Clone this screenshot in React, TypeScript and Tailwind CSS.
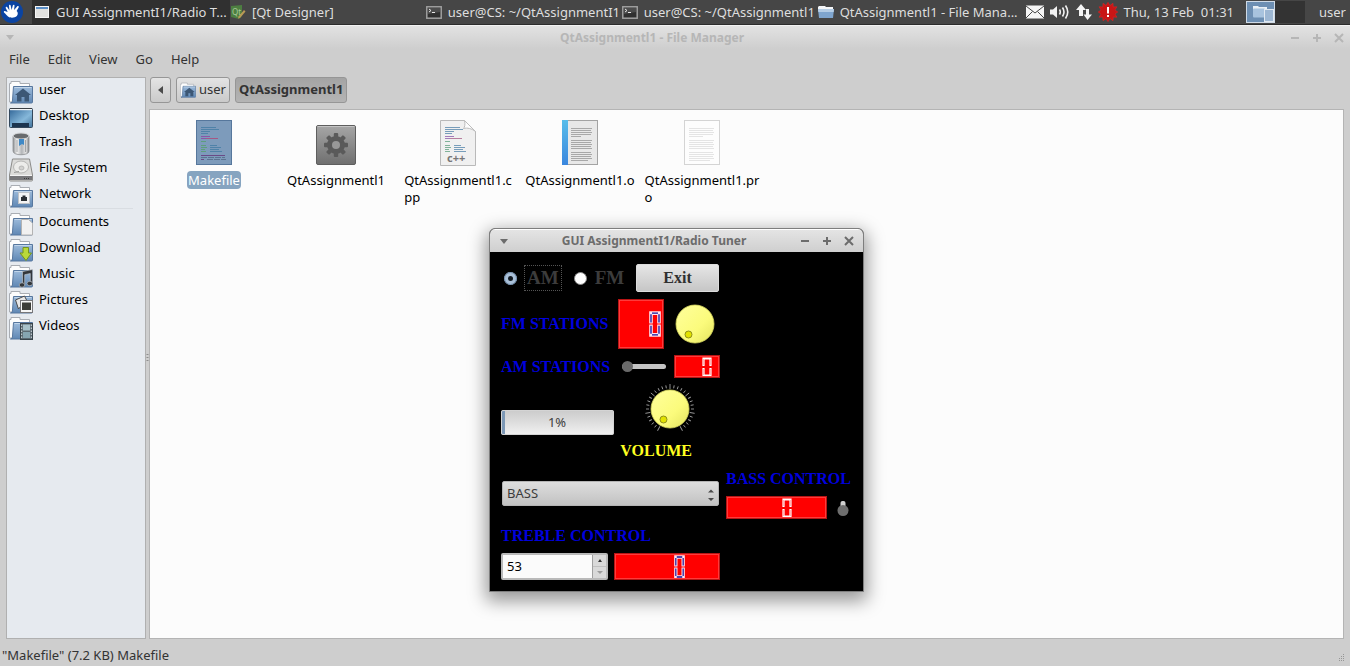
import React from "react";

type Kids = { children?: React.ReactNode };

/* ---------- icons ---------- */

function FolderIcon({ children, className = "h-6 w-6" }: Kids & { className?: string }) {
  return (
    <svg viewBox="0 0 24 24" className={`${className} shrink-0`} aria-hidden="true">
      <defs>
        <linearGradient id="folder" x1="0" y1="0" x2="0" y2="1">
          <stop offset="0" stopColor="#9dbbdb" />
          <stop offset="1" stopColor="#5f87b4" />
        </linearGradient>
      </defs>
      <path d="M.5 22V3.500h1.500V1.500h9v2h9.500V10H6L4 22Z" fill="#fdfdfd" stroke="#a9adb3" />
      <path d="M4.500 6.500h19v15.500a1 1 0 0 1-1 1H1.500c1.500-.5 2-1 2-3Z" fill="url(#folder)" stroke="#57779e" />
      <path d="M5.500 7.500h17" stroke="#c2d6ea" />
      {children}
    </svg>
  );
}

const HomeGlyph = () => (
  <path d="M14 8.500 22 15h-2v6.500h-4.500V17h-3v4.500H8V15H6Z" fill="#3c5775" />
);

const DesktopIcon = () => (
  <svg viewBox="0 0 24 24" className="h-6 w-6 shrink-0" aria-hidden="true">
    <defs>
      <linearGradient id="desk" x1="0" y1="0" x2="1" y2="1">
        <stop offset="0" stopColor="#2f6496" />
        <stop offset=".6" stopColor="#86b8da" />
        <stop offset="1" stopColor="#3f7099" />
      </linearGradient>
    </defs>
    <rect x=".5" y="2.500" width="23" height="19" rx="1" fill="url(#desk)" stroke="#34485c" />
    <path d="M1 3.500h22" stroke="#f2f4f6" strokeWidth="1.400" />
    <path d="M1 2.500h22" stroke="#3a3f45" />
    <rect x="3" y="17" width="17" height="4" fill="#1c3550" />
  </svg>
);

const TrashIcon = () => (
  <svg viewBox="0 0 24 24" className="h-6 w-6 shrink-0" aria-hidden="true">
    <defs>
      <linearGradient id="bin" x1="0" x2="1" y1="0" y2="0">
        <stop offset="0" stopColor="#8b8e91" />
        <stop offset=".25" stopColor="#f2f2f2" />
        <stop offset=".55" stopColor="#b2b5b8" />
        <stop offset=".8" stopColor="#e6e6e6" />
        <stop offset="1" stopColor="#7d8083" />
      </linearGradient>
    </defs>
    <path d="M4 4v15c0 5 16 5 16 0V4Z" fill="url(#bin)" stroke="#8d8f92" strokeWidth=".8" />
    <ellipse cx="12" cy="4" rx="8" ry="3" fill="#686b6e" stroke="#d4d6d8" />
    <path d="M10 7h5v6l-2-1-3 2Z" fill="#3f89c6" />
    <path d="M8 8v12M16.500 8v12" stroke="#8a8c8f" strokeWidth=".7" />
  </svg>
);

const DriveIcon = () => (
  <svg viewBox="0 0 24 24" className="h-6 w-6 shrink-0" aria-hidden="true">
    <path d="M3.500 1h17L23.500 17v5a1 1 0 0 1-1 1h-21a1 1 0 0 1-1-1v-5Z" fill="#dcdcda" stroke="#8b8b89" />
    <path d="M1 18h22v4H1Z" fill="#77777a" />
    <path d="M1 17.500h22" stroke="#f4f4f4" />
    <ellipse cx="12" cy="9" rx="7.500" ry="6" fill="#ececea" stroke="#b5b5b3" />
    <ellipse cx="12.500" cy="10" rx="2.500" ry="2" fill="#d2d2d0" stroke="#a8a8a6" strokeWidth=".7" />
    <path d="M5 14.500l5-1" stroke="#9a9a98" />
    <path d="M15 20.500h6" stroke="#3b3b3b" strokeDasharray="1 1" />
  </svg>
);

const NetworkGlyph = () => (
  <g>
    <rect x="9.500" y="8.500" width="11" height="11" fill="#f4f4f4" stroke="#bfc3c8" />
    <path d="M12 17v-4h1.500v-1.500h3V13H18v4Z" fill="#2b2f33" />
  </g>
);
const DocumentGlyph = () => (
  <path d="M12.500 7.500h7l4 3.500v12h-11Z" fill="#f1f1f1" stroke="#b3b3b3" />
);
const DownloadGlyph = () => (
  <path d="M14 9.500h5.500V15h3L17 22.500 11 15h3Z" fill="#b9d93a" stroke="#75951c" />
);
const MusicGlyph = () => (
  <g fill="#33373c" stroke="#c9ced4" strokeWidth=".6">
    <path d="M13.500 7.500 23.500 5.500V19h-2.200V9.500l-5.600 1.200V21h-2.200Z" />
    <ellipse cx="13" cy="21" rx="2.800" ry="2.200" />
    <ellipse cx="20.800" cy="19.500" rx="2.800" ry="2.200" />
  </g>
);
const PictureGlyph = () => (
  <g>
    <path d="m6.500 10 9-4 2 4-8 9Z" fill="#e8e8e8" stroke="#4b4b4b" />
    <rect x="11.500" y="10.500" width="12" height="12" fill="#f6f6f6" stroke="#77777a" />
    <rect x="13" y="12.500" width="9" height="7.500" fill="#3c3d38" />
  </g>
);
const VideoGlyph = () => (
  <g>
    <rect x="11.500" y="7.500" width="12" height="16" fill="#5c6a72" stroke="#39444b" />
    <rect x="14" y="8.500" width="7" height="6" fill="#a7c1c9" />
    <rect x="14" y="16" width="7" height="6" fill="#86a5b1" />
    <path d="M12.700 8.500v15M22.300 8.500v15" stroke="#d4dde1" strokeDasharray="1.500 1.500" />
  </g>
);

const Lines = ({ x, y, rows, color }: { x: number; y: number; rows: number[]; color: string }) => (
  <g stroke={color} strokeWidth="1">
    {rows.map((w, i) => (w ? <path key={i} d={`M${x} ${y + i * 2}h${w}`} /> : null))}
  </g>
);

const CodeLines = ({ y = 8.5 }: { y?: number }) => (
  <g strokeWidth="1">
    <path d={`M11 ${y}h15M11 ${y + 2}h18M11 ${y + 4}h9M11 ${y + 6}h7`} stroke="#4f82a8" />
    <path d={`M11 ${y + 9}h9M11 ${y + 11}h5`} stroke="#8a55a8" />
    <path d={`M16 ${y + 11}h12`} stroke="#a55884" />
    <path d={`M11 ${y + 14}h5M11 ${y + 18}h5M11 ${y + 20}h6M11 ${y + 22}h4M11 ${y + 24}h5`} stroke="#5d9e7c" />
    <path d={`M20 ${y + 18}h7M20 ${y + 20}h11M20 ${y + 22}h9M20 ${y + 24}h12`} stroke="#4f82a8" />
  </g>
);

const MakefileIcon = () => (
  <svg viewBox="0 0 48 48" className="h-12 w-12" aria-hidden="true">
    <rect x="6.500" y="1.500" width="35" height="44" fill="#7d9bbb" stroke="#56779c" />
    <CodeLines />
    <path d="M11 36.500h24M11 40.500h3" stroke="#6a4a86" />
    <path d="M11 38.500h24M17 40.500h19" stroke="#5c7391" strokeDasharray="6 1" />
  </svg>
);

const GearIcon = () => (
  <svg viewBox="0 0 48 48" className="h-12 w-12" aria-hidden="true">
    <defs>
      <linearGradient id="gearbg" x1="0" y1="0" x2="0" y2="1">
        <stop offset="0" stopColor="#a6a6a6" />
        <stop offset="1" stopColor="#6f6f6f" />
      </linearGradient>
    </defs>
    <rect x="4.500" y="6.500" width="39" height="39" rx="1.500" fill="url(#gearbg)" stroke="#5e5e5e" />
    <path d="M5.500 7.500h37" stroke="#c4c4c4" />
    <g fill="#5a5a5a">
      <circle cx="24" cy="26" r="9" />
      {[0, 45, 90, 135].map((a) => (
        <rect key={a} x="21.800" y="14" width="4.400" height="24" rx="1" transform={`rotate(${a} 24 26)`} />
      ))}
    </g>
    <circle cx="24" cy="26" r="4" fill="#989898" />
  </svg>
);

const CppIcon = () => (
  <svg viewBox="0 0 48 48" className="h-12 w-12" aria-hidden="true">
    <path d="M6.500 1.500h24l11 11v34h-35Z" fill="#f0f0f0" stroke="#b9b9b9" />
    <path d="M30.500 1.500c1 4 0 7-1 8 4-1 8 0 12 3Z" fill="#fdfdfd" stroke="#bcbcbc" />
    <g opacity=".75">
      <CodeLines />
    </g>
    <text x="13" y="43" fontSize="11" fontWeight="bold" fill="#777" fontFamily="Noto Sans, sans-serif">c++</text>
  </svg>
);

const textRows = [21, 20, 21, 20, 10, 0, 21, 20, 21, 20, 21, 0, 20, 21, 20, 21, 17];

const ObjectIcon = () => (
  <svg viewBox="0 0 48 48" className="h-12 w-12" aria-hidden="true">
    <defs>
      <linearGradient id="spine" x1="0" y1="0" x2="0" y2="1">
        <stop offset="0" stopColor="#58bdea" />
        <stop offset="1" stopColor="#3a86de" />
      </linearGradient>
    </defs>
    <rect x="6.500" y="1.500" width="35" height="44" fill="#e8e8e8" stroke="#a3a3a3" />
    <rect x="6" y="1" width="6" height="45" fill="url(#spine)" />
    <Lines x={15} y={9.5} rows={textRows} color="#a8a8a8" />
  </svg>
);

const TextIcon = () => (
  <svg viewBox="0 0 48 48" className="h-12 w-12" aria-hidden="true">
    <rect x="6.500" y="1.500" width="35" height="44" fill="#fdfdfd" stroke="#d4d4d4" />
    <Lines x={11} y={9.5} rows={textRows.map((w) => (w ? w + 4 : 0))} color="#e4e4e4" />
  </svg>
);

/* ---------- top panel ---------- */

const TerminalIcon = () => (
  <svg viewBox="0 0 16 16" className="h-4 w-4 shrink-0" aria-hidden="true">
    <rect x=".8" y="2.800" width="14.400" height="11.400" fill="#303030" stroke="#a0a0a0" strokeWidth="1.500" />
    <path d="M2 4h12v4L2 10Z" fill="#4c4c4c" />
    <path d="m3 5 2 1.500L3 8M6 8.500h3" stroke="#e6e6e6" fill="none" />
  </svg>
);
const WindowIcon = () => (
  <svg viewBox="0 0 16 16" className="h-4 w-4 shrink-0" aria-hidden="true">
    <rect x="1" y="2" width="14" height="12" fill="#e2e2e0" />
    <rect x="1" y="2" width="14" height="3" fill="#5b8fc7" />
    <rect x="1.500" y="2.500" width="13" height="11" fill="none" stroke="#f6f6f6" />
  </svg>
);
const QtIcon = () => (
  <svg viewBox="0 0 16 16" className="h-4 w-4 shrink-0" aria-hidden="true">
    <path d="M1 2 12 1v11L9 15 1 13Z" fill="#4d7f41" />
    <text x="2" y="11" fontSize="8" fill="#a9c99a" fontFamily="Noto Sans, sans-serif">Qt</text>
    <path d="m14 6 1.500 1.500L10 14l-2 .5.500-2Z" fill="#b99a55" />
  </svg>
);
const SmallFolderIcon = () => (
  <svg viewBox="0 0 16 16" className="h-4 w-4 shrink-0" aria-hidden="true">
    <path d="M0 3 1 2h6l1 1h7v4H0Z" fill="#f4f6f8" />
    <path d="M0 5h16l-1 9H1Z" fill="#7fa5ce" />
    <path d="M0 5h16l-.3 3H.3Z" fill="#b5cde5" />
  </svg>
);

function Task({ icon, active, children }: Kids & { icon: React.ReactNode; active?: boolean }) {
  return (
    <button
      className={`flex h-6 min-w-0 flex-1 items-center gap-1.5 whitespace-nowrap text-left ${
        active ? "bg-[#303030] pl-0.5" : ""
      }`}
    >
      {icon}
      {children}
    </button>
  );
}

function Panel() {
  return (
    <header className="flex h-[25px] shrink-0 items-center border-b border-[#2c2c2c] bg-[#464646] text-[13px] leading-4 text-[#dedede]">
      <button aria-label="Applications menu" className="mr-2 h-6 w-6 shrink-0">
        <svg viewBox="0 0 24 24" className="h-6 w-6" aria-hidden="true">
          <circle cx="12" cy="12" r="11" fill="#0b44a2" />
          <path
            d="M4.500 11c1.200-.3 2.200 1 3.200.8L5.800 8.200c-.5-1.400 1-1.900 1.700-.8l1.900 3L9 5.800c0-1.500 1.500-1.500 1.700-.2l.9 4.400 1.200-4.400c.5-1.300 1.900-.9 1.700.5l-.4 4 3-3.600c1-1 2.100-.1 1.500 1l-2 3.500c1.500 1 1.600 3.500.2 5-2 2-6.500 2.300-8.800.5C6.500 15.200 6 14 4.300 12.700c-.8-.7-.5-1.500.2-1.700Z"
            fill="#fff"
          />
        </svg>
      </button>
      <nav className="flex min-w-0 flex-1" aria-label="Windows">
        <Task active icon={<WindowIcon />}>GUI AssignmentI1/Radio T...</Task>
        <Task icon={<QtIcon />}>[Qt Designer]</Task>
        <Task icon={<TerminalIcon />}>user@CS: ~/QtAssignmentI1</Task>
        <Task icon={<TerminalIcon />}>user@CS: ~/QtAssignmentl1</Task>
        <Task icon={<SmallFolderIcon />}>QtAssignmentl1 - File Mana...</Task>
      </nav>
      <div className="flex shrink-0 items-center gap-1.5 pl-3 pr-1.5">
        <svg viewBox="0 0 18 14" className="h-3.5 w-[18px]" aria-label="Mail" role="img">
          <rect width="18" height="13" y=".5" fill="#f5f5f5" />
          <path d="m0 1 9 7 9-7M0 13l6.500-6.500M18 13l-6.500-6.500" stroke="#464646" fill="none" />
        </svg>
        <svg viewBox="0 0 20 16" className="h-4 w-5" aria-label="Volume" role="img">
          <path d="M0 5.500h3L7 2v12l-4-3.500H0Z" fill="#f2f2f2" />
          <path d="M9.500 5.500q1.500 2.500 0 5M12.500 3.500q3 4.500 0 9M15.500 1.500q4.500 6.500 0 13" stroke="#f2f2f2" strokeWidth="1.600" fill="none" />
        </svg>
        <svg viewBox="0 0 16 16" className="h-4 w-4" aria-label="Network" role="img">
          <path d="M5 0 10 6H7v6H3V6H0ZM11.500 16 7.500 10.500H10V5h3v5.500h3Z" fill="#f4f4f4" />
        </svg>
        <svg viewBox="0 0 20 20" className="h-5 w-5" aria-label="Alert" role="img">
          <path
            d="m10 .3 1.900 3.200L15 1.300l.2 3.700 3.700-.2-2 3.200 2.900 2-2.900 2 2 3.200-3.700-.2-.2 3.700-3.100-2.200L10 19.700l-1.900-3.200L5 18.700 4.800 15l-3.700.2 2-3.200-2.900-2 2.900-2-2-3.200 3.700.2L5 1.300l3.100 2.200Z"
            fill="#c81616"
            stroke="#e02424"
            strokeWidth=".6"
          />
          <path d="M10 5v6.500M10 13v2" stroke="#fff" strokeWidth="2" />
        </svg>
      </div>
      <time className="shrink-0 whitespace-pre">Thu, 13 Feb  01:31</time>
      <div className="ml-3 mr-3.5 flex h-[22px] shrink-0" aria-label="Workspaces">
        <button aria-label="Workspace 1" className="h-full w-[29px] border border-[#cfdae6] bg-[#6d8fb3]">
          <svg viewBox="0 0 27 20" className="h-full w-full" aria-hidden="true">
            <path d="M6 5V4h5l1 1h8v4H6Z" fill="#e9eff5" />
            <rect x="6" y="6.500" width="12" height="9" rx="1" fill="#a8c3de" />
            <rect x="17.500" y="7.500" width="9" height="12" fill="#9db7d3" stroke="#dfe8f1" />
          </svg>
        </button>
        <button aria-label="Workspace 2" className="h-full w-[30px] bg-[#333333]" />
      </div>
      <button className="shrink-0 pr-1">user</button>
    </header>
  );
}

/* ---------- file manager ---------- */

function TitleGlyphs() {
  return (
    <div className="flex gap-3">
      <button aria-label="Minimize">
        <svg viewBox="0 0 10 10" className="h-2.5 w-2.5"><path d="M1 5h8" stroke="currentColor" strokeWidth="2" /></svg>
      </button>
      <button aria-label="Maximize">
        <svg viewBox="0 0 10 10" className="h-2.5 w-2.5"><path d="M1 5h8M5 1v8" stroke="currentColor" strokeWidth="2" /></svg>
      </button>
      <button aria-label="Close">
        <svg viewBox="0 0 10 10" className="h-2.5 w-2.5"><path d="m1 1 8 8M9 1 1 9" stroke="currentColor" strokeWidth="2" /></svg>
      </button>
    </div>
  );
}

function TitleArrow() {
  return (
    <button aria-label="Window menu">
      <svg viewBox="0 0 8 5" className="h-[5px] w-2"><path d="M0 0h8L4 5Z" fill="currentColor" /></svg>
    </button>
  );
}

const places = [
  { name: "user", icon: <FolderIcon><HomeGlyph /></FolderIcon> },
  { name: "Desktop", icon: <DesktopIcon /> },
  { name: "Trash", icon: <TrashIcon /> },
  { name: "File System", icon: <DriveIcon /> },
  { name: "Network", icon: <FolderIcon><NetworkGlyph /></FolderIcon> },
];
const bookmarks = [
  { name: "Documents", icon: <FolderIcon><DocumentGlyph /></FolderIcon> },
  { name: "Download", icon: <FolderIcon><DownloadGlyph /></FolderIcon> },
  { name: "Music", icon: <FolderIcon><MusicGlyph /></FolderIcon> },
  { name: "Pictures", icon: <FolderIcon><PictureGlyph /></FolderIcon> },
  { name: "Videos", icon: <FolderIcon><VideoGlyph /></FolderIcon> },
];

function PlaceList({ items }: { items: typeof places }) {
  return (
    <ul>
      {items.map((p) => (
        <li key={p.name}>
          <a href="#" className="flex h-[26px] items-center gap-1.5 pl-0.5">
            <span className="pt-0.5">{p.icon}</span>
            <span className="pb-0.5">{p.name}</span>
          </a>
        </li>
      ))}
    </ul>
  );
}

const files = [
  { lines: ["Makefile"], icon: <MakefileIcon />, selected: true },
  { lines: ["QtAssignmentl1"], icon: <GearIcon /> },
  { lines: ["QtAssignmentl1.c", "pp"], icon: <CppIcon /> },
  { lines: ["QtAssignmentl1.o"], icon: <ObjectIcon /> },
  { lines: ["QtAssignmentl1.pr", "o"], icon: <TextIcon /> },
];

const crumb = "flex h-[26px] items-center justify-center rounded-[3px] border border-[#969696]";

function FileManager() {
  return (
    <main className="flex min-h-0 flex-1 flex-col bg-[#cecece] text-[#333333]">
      <div className="flex h-6 shrink-0 items-center border-t border-[#f2f2f2] bg-linear-to-b from-[#e2e2e2] to-[#cecece] px-1.5 text-[#b6b6b6]">
        <TitleArrow />
        <h1 className="flex-1 text-center text-[12px] font-bold leading-4">QtAssignmentl1 - File Manager</h1>
        <TitleGlyphs />
      </div>
      <nav className="flex h-7 shrink-0 items-center gap-[18px] px-[9px] pb-1.5 text-[13px]" aria-label="Menu">
        {["File", "Edit", "View", "Go", "Help"].map((m) => (
          <button key={m}>{m}</button>
        ))}
      </nav>
      <div className="flex min-h-0 flex-1 pl-1.5 pr-1.5">
        <aside className="w-[140px] shrink-0 border border-[#b0b0b0] bg-[#e6eaef] text-[13px] text-black">
          <PlaceList items={places} />
          <hr className="mx-3 mb-px h-0 border-0 border-t border-[#d9dde2]" />
          <PlaceList items={bookmarks} />
        </aside>
        <div className="flex w-[3px] shrink-0 items-center justify-center" aria-hidden="true">
          <svg viewBox="0 0 3 8" className="h-2 w-[3px]"><path d="M1.500 0v8" stroke="#8e8e8e" strokeDasharray="1 2" strokeWidth="2" /></svg>
        </div>
        <section className="flex min-w-0 flex-1 flex-col">
          <div className="flex h-8 shrink-0 gap-[5px] pl-px text-[13px]">
            <button aria-label="Back" className={`${crumb} w-[21px] bg-linear-to-b from-[#e4e4e4] to-[#cacaca]`}>
              <svg viewBox="0 0 5 8" className="h-2 w-[5px]"><path d="M5 0v8L0 4Z" fill="#4a4a4a" /></svg>
            </button>
            <button className={`${crumb} w-[54px] gap-[3px] bg-linear-to-b from-[#e4e4e4] to-[#cacaca]`}>
              <FolderIcon className="h-4 w-4"><HomeGlyph /></FolderIcon>
              user
            </button>
            <button className={`${crumb} bg-linear-to-b from-[#a4a4a4] to-[#b4b4b4] px-[3px] font-bold`}>QtAssignmentl1</button>
          </div>
          <ul className="flex flex-1 flex-wrap content-start border border-[#b4b4b4] bg-[#fcfcfc] pl-[3px] pt-[9px] text-[13px] leading-[17px] text-black">
            {files.map((f) => (
              <li key={f.lines[0]} className="flex w-[122px] flex-col items-center">
                {f.icon}
                <span
                  className={`mt-1 whitespace-nowrap rounded px-px pt-px ${f.selected ? "bg-[#86a4c0] text-white" : ""}`}
                >
                  {f.lines.map((l) => (
                    <span key={l} className="block">{l}</span>
                  ))}
                </span>
              </li>
            ))}
          </ul>
        </section>
      </div>
      <footer className="flex h-[27px] shrink-0 items-center justify-between px-0.5 pt-1.5 text-[13px]">
        "Makefile" (7.2 KB) Makefile
        <svg viewBox="0 0 10 10" className="mr-1 h-2.5 w-2.5" aria-hidden="true">
          <path d="M9.500 3v7M7.500 5v5M5.500 7v3" fill="none" stroke="#969696" strokeDasharray="1 1" />
        </svg>
      </footer>
    </main>
  );
}

/* ---------- radio tuner ---------- */

function Lcd({ className, tall, navy, label }: { className: string; tall?: boolean; navy?: boolean; label: string }) {
  return (
    <output
      aria-label={label}
      className={`flex items-center border border-[#b81414] bg-[#ff0000] outline-1 -outline-offset-2 outline-[#ff3a3a] ${className}`}
    >
      {tall || navy ? (
        <svg
          viewBox="0 0 12 24"
          preserveAspectRatio="none"
          className={tall ? "h-[26px] w-3" : "h-6 w-[11px]"}
          aria-hidden="true"
        >
          <path d="M2 11.500V2h8v9.500M2 12.500v9.500h8v-9.500" fill="none" stroke="#ffe4ee" strokeWidth="3.600" />
          <path d="M2 10.500V3M3 2h6M10 3v7.500M2 13.500V21M3 22h6M10 21v-7.500" fill="none" stroke="#14129a" strokeWidth="1.300" />
        </svg>
      ) : (
        <svg viewBox="0 0 10 20" className="h-5 w-2.5" aria-hidden="true">
          <path d="M1.500 9V1.500h7V9M1.500 11v7.500h7V11" fill="none" stroke="#ffffff" strokeWidth="2.200" />
          <path d="M1.500 8V2M8.500 8V2M1.500 12v6M8.500 12v6" fill="none" stroke="#ff8c8c" strokeWidth=".6" />
        </svg>
      )}
    </output>
  );
}

function Dial({ label, ticks }: { label: string; ticks?: boolean }) {
  return (
    <label className="relative flex shrink-0">
      <input type="range" defaultValue={0} aria-label={label} className="sr-only" />
      <svg viewBox="1 0 50 50" className="h-[50px] w-[50px]" aria-hidden="true">
        <defs>
          <linearGradient id="knob" x1="0" y1="0" x2="1" y2="1">
            <stop offset="0" stopColor="#ffff9c" />
            <stop offset=".6" stopColor="#fbfb7c" />
            <stop offset="1" stopColor="#e3e35e" />
          </linearGradient>
        </defs>
        {ticks &&
          Array.from({ length: 31 }, (_, i) => (
            <path
              key={i}
              d={i % 5 === 0 ? "M26 0v5" : "M26 1v3"}
              stroke="#9c9c9c"
              strokeWidth=".9"
              transform={`rotate(${-150 + i * 10} 26 25)`}
            />
          ))}
        <circle cx="26" cy="25" r="19" fill="url(#knob)" stroke="#d8d860" strokeWidth=".8" />
        <circle cx="19.500" cy="35.500" r="3.500" fill="#e2e200" stroke="#8f8f1c" />
      </svg>
    </label>
  );
}

const radio =
  "h-[13px] w-[13px] shrink-0 appearance-none rounded-full border border-[#8a8a8a] bg-white checked:border-4 checked:border-[#a9c0d8] checked:bg-[#101820] checked:outline-1 checked:-outline-offset-1 checked:outline-[#6f8aa8]";
const caption = "text-[16px] font-bold leading-[18px] text-[#0000dd] font-['Liberation_Serif',serif]";

function Tuner() {
  return (
    <section
      aria-label="Radio Tuner"
      className="absolute left-[489px] top-[228px] w-[375px] overflow-hidden rounded-t-md border border-[#7e7e7e] bg-black text-[13px] text-[#3c3c3c] shadow-[0_6px_18px_3px_rgba(0,0,0,0.4)]"
    >
      <div className="flex h-[23px] items-center border-t border-white bg-linear-to-b from-[#e4e4e4] to-[#cfcfcf] pl-2.5 pr-[9px] text-[#6c6c6c]">
        <TitleArrow />
        <h2 className="flex-1 text-center text-[12px] font-bold leading-4">GUI AssignmentI1/Radio Tuner</h2>
        <TitleGlyphs />
      </div>
      <form className="px-[11px] pb-[11px] pt-3" onSubmit={(e) => e.preventDefault()}>
        <div className="flex w-[219px] flex-col">
          <div className="flex h-7 items-center text-[19px] font-bold leading-7 font-['Liberation_Serif',serif]">
            <label className="flex items-center gap-[7px] pl-[3px]">
              <input type="radio" name="band" defaultChecked className={radio} />
              <span className="border border-dotted border-[#555] px-0.5 leading-6">AM</span>
            </label>
            <label className="ml-3 flex items-center gap-2">
              <input type="radio" name="band" className={radio} />
              FM
            </label>
            <button className="ml-auto mr-px h-7 w-[83px] rounded-[2px] border border-[#dcdcdc] bg-linear-to-b from-[#e6e6e6] to-[#c6c6c6] text-[16px] leading-6 text-[#303030]">
              Exit
            </button>
          </div>
          <div className="mt-[7px] flex h-[50px] items-center justify-between">
            <span className={caption}>FM STATIONS</span>
            <div className="flex items-center gap-1.5">
              <Lcd label="FM station" tall navy className="h-[50px] w-[46px] justify-end pr-0.5" />
              <Dial label="FM station dial" />
            </div>
          </div>
          <div className="mt-1.5 flex h-[23px] items-center justify-between">
            <span className={caption}>AM STATIONS</span>
            <div className="flex items-center gap-2">
              <input
                type="range"
                defaultValue={0}
                aria-label="AM station slider"
                className="h-3 w-11 appearance-none bg-transparent [&::-webkit-slider-runnable-track]:h-[5px] [&::-webkit-slider-runnable-track]:rounded-full [&::-webkit-slider-runnable-track]:bg-[#c4c4c4] [&::-webkit-slider-thumb]:-mt-[3px] [&::-webkit-slider-thumb]:h-[11px] [&::-webkit-slider-thumb]:w-[11px] [&::-webkit-slider-thumb]:appearance-none [&::-webkit-slider-thumb]:rounded-full [&::-webkit-slider-thumb]:bg-[#6a6a6a]"
              />
              <Lcd label="AM station" className="h-[23px] w-[46px] justify-end pr-[7px]" />
            </div>
          </div>
          <div className="mt-1.5 flex h-[51px] items-end">
            <div
              role="progressbar"
              aria-label="Volume level"
              aria-valuenow={1}
              className="h-[25px] w-[113px] rounded-[2px] border border-l-4 border-[#8e8e8e] border-l-[#7c98b6] bg-linear-to-b from-[#cccccc] to-[#f0f0f0] pr-1 text-center leading-[23px] outline-1 -outline-offset-1 outline-[#d4d4d4]"
            >
              1%
            </div>
            <div className="ml-[31px] self-start">
              <Dial label="Volume dial" ticks />
            </div>
          </div>
          <span className="mt-[7px] self-end pr-7 text-[16px] font-bold leading-[18px] text-[#ffff20] font-['Liberation_Serif',serif]">
            VOLUME
          </span>
        </div>
        <div className="mt-2.5 flex h-[49px] items-center justify-between">
          <div className="relative mb-0.5 ml-px">
            <select
              aria-label="Tone"
              className="block h-[25px] w-[217px] appearance-none rounded-[2px] border border-[#b4b4b4] bg-linear-to-b from-[#dedede] to-[#c2c2c2] px-1 pb-0.5 leading-5"
            >
              <option>BASS</option>
              <option>TREBLE</option>
            </select>
            <svg viewBox="0 0 6 12" className="pointer-events-none absolute right-[5px] top-2 h-3 w-1.5" aria-hidden="true">
              <path d="M0 3.500 3 .5l3 3ZM0 9l3 3 3-3Z" fill="#4a4a4a" />
            </svg>
          </div>
          <div className="flex w-[126px] flex-col gap-2">
            <span className={`${caption} whitespace-nowrap`}>BASS CONTROL</span>
            <div className="flex items-center justify-between">
              <Lcd label="Bass" className="h-[23px] w-[101px] justify-end pr-[34px]" />
              <label className="relative mr-[3px] flex">
                <input type="range" defaultValue={0} aria-label="Bass level" className="sr-only" />
                <svg viewBox="0 0 12 17" className="h-[17px] w-3" aria-hidden="true">
                  <rect x="3.500" y="2" width="5" height="8" rx="2" fill="#d0d0d0" />
                  <circle cx="6" cy="11.500" r="5.500" fill="#6e6e6e" />
                </svg>
              </label>
            </div>
          </div>
        </div>
        <label htmlFor="treble" className={`${caption} mt-2 block`}>TREBLE CONTROL</label>
        <div className="mt-2 flex h-[27px] gap-1.5">
          <div className="flex w-[107px] rounded-[2px] border-2 border-[#b9b9b9] bg-[#fbfbfb]">
            <input
              id="treble"
              type="number"
              defaultValue={53}
              className="w-0 min-w-0 flex-1 appearance-none px-1 text-black outline-none [appearance:textfield] [&::-webkit-inner-spin-button]:appearance-none"
            />
            <div className="flex w-[14px] flex-col border-l border-[#a0a0a0] bg-[#d9d9d9]">
              <button aria-label="Increase" className="flex flex-1 items-center justify-center">
                <svg viewBox="0 0 4 3" className="h-[3px] w-1"><path d="M0 3 2 0l2 3Z" fill="#333" /></svg>
              </button>
              <button aria-label="Decrease" className="flex flex-1 items-center justify-center border-t border-[#c0c0c0]">
                <svg viewBox="0 0 6 3" className="h-[3px] w-1.5"><path d="M0 0h6L3 3Z" fill="#9c9c9c" /></svg>
              </button>
            </div>
          </div>
          <Lcd label="Treble" navy className="w-[106px] justify-end pr-[34px]" />
        </div>
      </form>
    </section>
  );
}

export default function App() {
  return (
    <div className="relative flex h-screen min-h-[620px] flex-col overflow-hidden font-['Noto_Sans',sans-serif]">
      <Panel />
      <FileManager />
      <Tuner />
    </div>
  );
}
